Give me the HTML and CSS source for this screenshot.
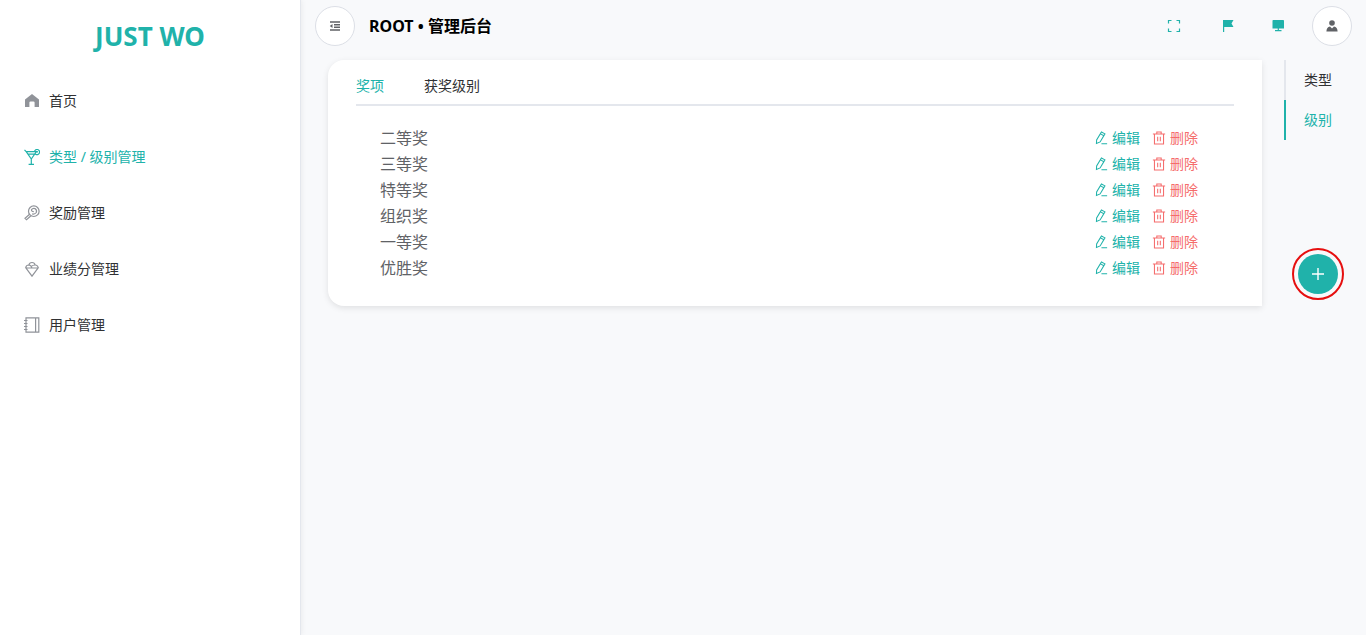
FILE: index.html
```html
<!DOCTYPE html>
<html lang="zh-CN">
<head>
<meta charset="utf-8">
<meta name="viewport" content="width=device-width, initial-scale=1">
<title>JUST WO</title>
<link rel="stylesheet" href="styles.css">
</head>
<body>
<svg class="sprite" aria-hidden="true">
  <symbol id="edit" viewBox="0 0 16 16"><path d="M8.5 1.2 12.5 3.3 7 12.5 2.8 14.3 3 10.3ZM7.4 3.3 11.3 5.4M8.5 14.5H15"/></symbol>
  <symbol id="trash" viewBox="0 0 16 16"><path d="M1 3.5H15M5.5 3.3V1.2H10.5V3.3M2.8 3.5V14.8H13.2V3.5M6.5 6.5V11.8M9.5 6.5V11.8"/></symbol>
</svg>
<aside class="sidebar">
  <h1 class="brand">JUST WO</h1>
  <nav class="menu">
    <a class="menu-item" href="#"><svg class="icon solid" viewBox="0 0 16 16"><path d="M8 1 15 6.6V14H10.6V9.6Q10.6 8.4 9.4 8.4H6.6Q5.4 8.4 5.4 9.6V14H1V6.6Z"/></svg>首页</a>
    <a class="menu-item active" href="#"><svg class="icon" viewBox="0 0 16 16"><path d="M.5 .8 2.2 2.6H12.4L7.3 10 2.2 2.6M4 5.2H10.6M7.3 10V15.2M4.6 15.3H10M10.4 2.6A2.6 2.6 0 1 1 12.4 5.6L10.9 5M12.4 2.6 14 2.8"/></svg>类型 / 级别管理</a>
    <a class="menu-item" href="#"><svg class="icon" viewBox="0 0 16 16"><circle cx="9.8" cy="6.2" r="5.3"/><path d="M5.6 9.2 1 13.3 2.5 14.8 7 10.8M9.8 6.7Q7.3 6.6 7.5 4.7 8.8 2.9 11 3.6 13.2 5.2 12.3 7.5 10.8 9.6 8.2 8.9"/></svg>奖励管理</a>
    <a class="menu-item" href="#"><svg class="icon" viewBox="0 0 16 16"><path d="M2 7H14L8 15.2ZM1.4 7H14.6M1.8 7A3 3 0 0 1 4.8 4 3.3 3.3 0 0 1 11.2 4 3 3 0 0 1 14.2 7M4.8 4Q7.4 4.2 7.8 6.8M11.2 4Q8.8 4 7.2 5.4"/></svg>业绩分管理</a>
    <a class="menu-item" href="#"><svg class="icon" viewBox="0 0 16 16"><path d="M2 .8H14.8V15.2H2ZM11.6 .8V15.2M0 3.5H3.5M0 6.5H3.5M0 9.5H3.5M0 12.5H3.5"/></svg>用户管理</a>
  </nav>
</aside>
<div class="page">
  <header class="topbar">
    <button class="round" type="button" aria-label="折叠菜单"><svg class="icon small" viewBox="0 0 12 12"><path class="thick" d="M1 2H11M5 4.7H11M5 7.3H11M1 10H11"/><path class="fill" d="M3.5 4V8L.8 6Z"/></svg></button>
    <h2 class="title">ROOT • 管理后台</h2>
    <div class="tools">
      <button class="tool" type="button" aria-label="全屏"><svg class="icon" viewBox="0 0 16 16"><path d="M2.5 5.5V2.5H5.5M10.5 2.5H13.5V5.5M13.5 10.5V13.5H10.5M5.5 13.5H2.5V10.5"/></svg></button>
      <button class="tool" type="button" aria-label="旗帜"><svg class="icon solid" viewBox="0 0 16 16"><path d="M5 2H15.5L13.5 5.5 15.5 9H6.2V14H5Z"/></svg></button>
      <button class="tool" type="button" aria-label="显示"><svg class="icon solid" viewBox="0 0 16 16"><path d="M3.3 2H13.2Q14 2 14 2.8V10.4H2.5V2.8Q2.5 2 3.3 2ZM7.7 10.4H8.9V12H11.5V13.2H5V12H7.7Z"/></svg></button>
    </div>
    <button class="round" type="button" aria-label="用户"><svg class="icon small" viewBox="0 0 12 12"><circle class="fill" cx="6" cy="3" r="2.8"/><path class="fill" d="M.4 11.5Q.6 7 4 6.6L6 8.6 8 6.6Q11.4 7 11.6 11.5Z"/></svg></button>
  </header>
  <main class="content">
    <section class="card">
      <div class="tabs" role="tablist">
        <button class="tab active" type="button" role="tab" aria-selected="true">奖项</button>
        <button class="tab" type="button" role="tab" aria-selected="false">获奖级别</button>
      </div>
      <ul class="list">
        <li class="row"><span class="name">二等奖</span><a class="link" href="#"><svg class="icon mini"><use href="#edit"/></svg>编辑</a><a class="link danger" href="#"><svg class="icon mini"><use href="#trash"/></svg>删除</a></li>
        <li class="row"><span class="name">三等奖</span><a class="link" href="#"><svg class="icon mini"><use href="#edit"/></svg>编辑</a><a class="link danger" href="#"><svg class="icon mini"><use href="#trash"/></svg>删除</a></li>
        <li class="row"><span class="name">特等奖</span><a class="link" href="#"><svg class="icon mini"><use href="#edit"/></svg>编辑</a><a class="link danger" href="#"><svg class="icon mini"><use href="#trash"/></svg>删除</a></li>
        <li class="row"><span class="name">组织奖</span><a class="link" href="#"><svg class="icon mini"><use href="#edit"/></svg>编辑</a><a class="link danger" href="#"><svg class="icon mini"><use href="#trash"/></svg>删除</a></li>
        <li class="row"><span class="name">一等奖</span><a class="link" href="#"><svg class="icon mini"><use href="#edit"/></svg>编辑</a><a class="link danger" href="#"><svg class="icon mini"><use href="#trash"/></svg>删除</a></li>
        <li class="row"><span class="name">优胜奖</span><a class="link" href="#"><svg class="icon mini"><use href="#edit"/></svg>编辑</a><a class="link danger" href="#"><svg class="icon mini"><use href="#trash"/></svg>删除</a></li>
      </ul>
    </section>
    <div class="rail">
      <nav class="side-tabs">
        <a class="side-tab" href="#">类型</a>
        <a class="side-tab active" href="#">级别</a>
      </nav>
      <div class="ring"><button class="add" type="button" aria-label="添加"><svg class="icon" viewBox="0 0 16 16"><path class="thick" d="M8 2V14M2 8H14"/></svg></button></div>
    </div>
  </main>
</div>
</body>
</html>
```
FILE: styles.css
```css
* { box-sizing: border-box; }
body {
  margin: 0;
  min-height: 100vh;
  display: flex;
  background: #f8f9fb;
  color: #303133;
  font: 14px/20px "Noto Sans", "Noto Sans CJK SC", sans-serif;
}
h1, h2, ul { margin: 0; padding: 0; list-style: none; }
a { color: inherit; text-decoration: none; }
button { padding: 0; border: 0; background: none; color: inherit; font: inherit; cursor: pointer; }
.sprite { position: absolute; width: 0; height: 0; }
.icon { display: block; flex: none; width: 16px; height: 16px; fill: none; stroke: currentColor; stroke-width: 1.2; }
.solid, .fill { fill: currentColor; stroke: none; }
.thick { stroke-width: 1.4; }
.small { width: 12px; height: 12px; }
.mini { width: 14px; height: 14px; }

.sidebar { flex: none; width: 301px; background: #fff; border-right: 1px solid #e4e7ed; box-shadow: 0 0 6px rgba(0, 0, 0, .08); }
.brand { padding: 18px 0; color: #20b2aa; font-size: 26px; line-height: 36px; text-align: center; }
.menu { padding-top: 1px; }
.menu-item { display: flex; align-items: center; gap: 9px; height: 56px; padding: 0 24px; }
.menu-item .icon { color: #909399; }
.menu-item.active, .menu-item.active .icon { color: #20b2aa; }

.page { flex: 1; min-width: 0; }
.topbar { display: flex; align-items: center; gap: 14px; height: 52px; padding: 0 14px; }
.round { display: grid; place-items: center; flex: none; width: 40px; height: 40px; border: 1px solid #dcdfe6; border-radius: 50%; background: #fff; color: #606266; }
.title { flex: 1; color: #000; font-size: 16px; line-height: 24px; }
.tools { display: flex; gap: 36px; margin-right: 12px; color: #20b2aa; }

.content { display: flex; align-items: flex-start; gap: 22px; padding: 8px 14px 0 27px; }
.card { flex: 1; min-width: 0; padding: 6px 28px 25px; background: #fff; border-radius: 16px 0 0 16px; box-shadow: 0 2px 6px rgba(0, 0, 0, .1); }
.tabs { display: flex; gap: 40px; height: 40px; padding-top: 2px; border-bottom: 2px solid #e4e7ed; }
.tab.active { color: #20b2aa; }
.list { padding: 19px 36px 0 24px; }
.row { display: flex; align-items: center; gap: 12px; height: 26px; }
.name { flex: 1; color: #606266; font-size: 16px; }
.link { display: flex; align-items: center; gap: 4px; color: #20b2aa; }
.link.danger { color: #f56c6c; }

.rail { flex: none; width: 68px; }
.side-tab { display: block; padding: 10px 0 10px 18px; border-left: 2px solid #e4e7ed; }
.side-tab.active { border-color: #20b2aa; color: #20b2aa; }
.ring { display: grid; place-items: center; width: 52px; height: 52px; margin: 108px 0 0 8px; border: 2px solid #e60f0f; border-radius: 50%; }
.add { display: grid; place-items: center; width: 40px; height: 40px; border-radius: 50%; background: #20b2aa; color: #fff; }
```
